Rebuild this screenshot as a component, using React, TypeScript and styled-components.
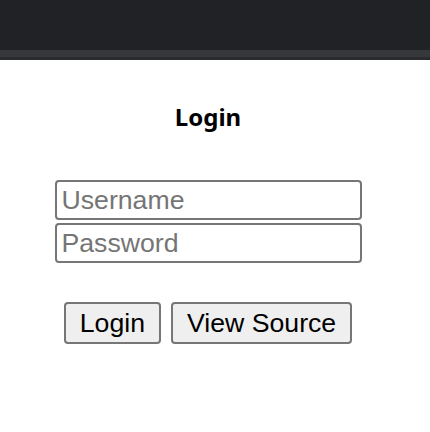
import React from "react";
import styled, { createGlobalStyle } from "styled-components";

const GlobalStyle = createGlobalStyle`
  html, body {
    margin: 0;
    padding: 0;
    background: #ffffff;
  }
  body {
    font-family: "Liberation Sans", Arial, sans-serif;
  }
`;

const TopBar = styled.header`
  display: flex;
  flex-direction: column;
`;

const BarBand = styled.div<{ $h: number; $c: string }>`
  height: ${(p) => p.$h}px;
  background: ${(p) => p.$c};
`;

const Main = styled.main`
  display: flex;
  flex-direction: column;
  align-items: center;
  padding: 41px 14px 0 0;
`;

const Title = styled.h1`
  margin: 0;
  font-family: "Noto Sans", "Open Sans", sans-serif;
  font-weight: 700;
  font-size: 24px;
  line-height: 32px;
  color: #000;
`;

const Fields = styled.div`
  display: flex;
  flex-direction: column;
  gap: 3px;
  margin-top: 47px;
`;

const Input = styled.input`
  box-sizing: border-box;
  width: 307px;
  height: 40px;
  margin: 0;
  padding: 3px 5px;
  border: 2px solid #767676;
  border-radius: 4px;
  font-family: "Liberation Sans", Arial, sans-serif;
  font-size: 26.67px;
  line-height: 30px;
  color: #000;
  background: #fff;
  outline: none;
  &::placeholder {
    color: #757575;
    opacity: 1;
  }
`;

const Actions = styled.div`
  display: flex;
  gap: 10px;
  margin-top: 39px;
`;

const Button = styled.button`
  box-sizing: border-box;
  height: 42px;
  margin: 0;
  padding: 4px 14px;
  border: 2px solid #767676;
  border-radius: 4px;
  background: #efefef;
  font-family: "Liberation Sans", Arial, sans-serif;
  font-size: 26.67px;
  line-height: 30px;
  color: #000;
`;

export default function App() {
  return (
    <>
      <GlobalStyle />
      <TopBar>
        <BarBand $h={50} $c="#212226" />
        <BarBand $h={7} $c="#36383c" />
        <BarBand $h={3} $c="#2a2b2f" />
      </TopBar>
      <Main>
        <Title>Login</Title>
        <Fields>
          <Input type="text" placeholder="Username" />
          <Input type="password" placeholder="Password" />
        </Fields>
        <Actions>
          <Button>Login</Button>
          <Button>View Source</Button>
        </Actions>
      </Main>
    </>
  );
}
